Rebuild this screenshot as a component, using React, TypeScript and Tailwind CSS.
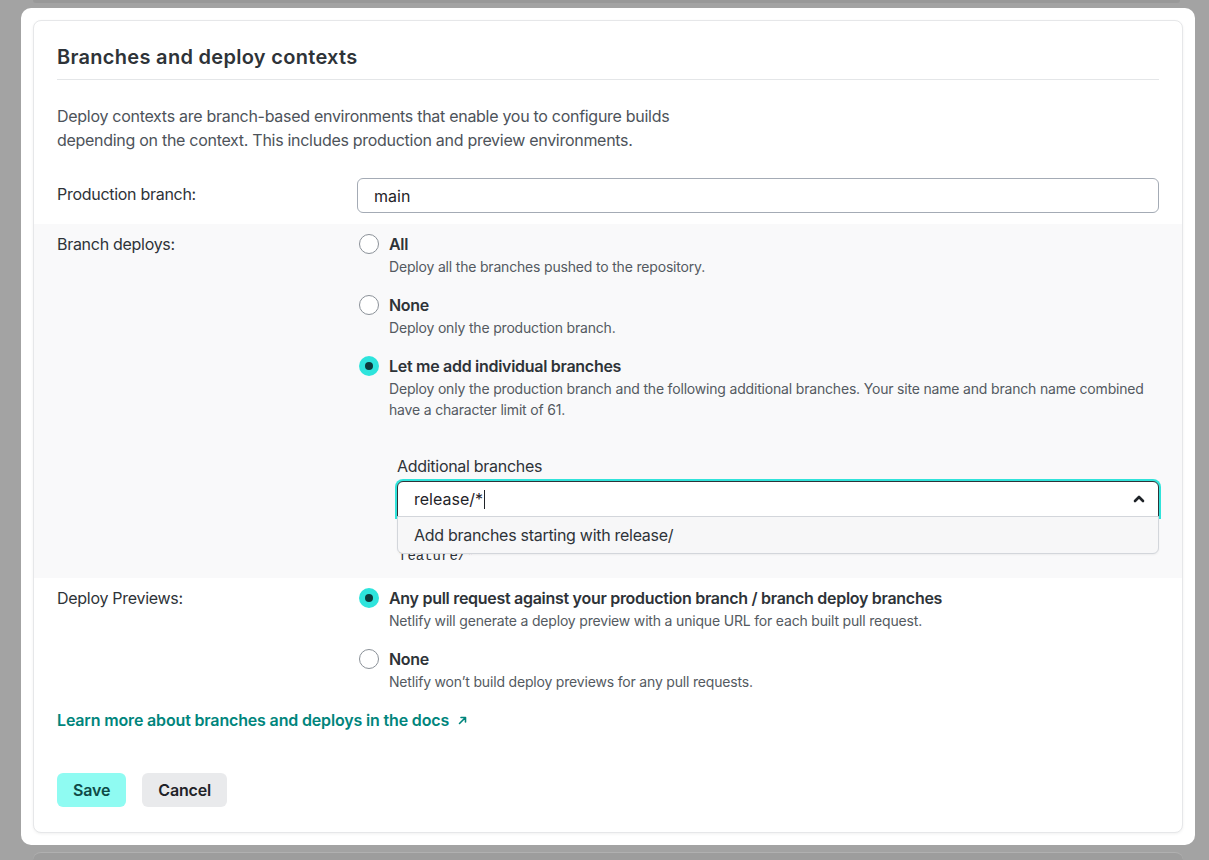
import React from "react";

type RadioProps = {
  checked?: boolean;
  title: string;
  description: string;
};

function Radio({ checked, title, description }: RadioProps) {
  return (
    <div className="flex gap-[10px]">
      <div className="pt-[2px]">
        {checked ? (
          <span className="ml-[2px] flex h-5 w-5 items-center justify-center rounded-full bg-[#2ee4dc]">
            <span className="h-[8px] w-[8px] rounded-full bg-[#0d3a3c]" />
          </span>
        ) : (
          <span className="ml-[2px] block h-5 w-5 rounded-full border border-[#8b9198] bg-white" />
        )}
      </div>
      <div>
        <div className="text-base leading-6 font-semibold tracking-[-0.018em] text-[#2e3338]">{title}</div>
        <div className="text-sm leading-[21px] tracking-[-0.013em] text-[#545a61]">{description}</div>
      </div>
    </div>
  );
}

function Row({ label, children }: { label: string; children: React.ReactNode }) {
  return (
    <div className="flex px-[23px]">
      <div className="w-[300px] shrink-0 pt-[8px] text-base leading-6 tracking-[-0.018em] text-[#2e3338]">{label}</div>
      <div className="flex-1">{children}</div>
    </div>
  );
}

export default function App() {
  return (
    <div
      className="min-h-[860px] bg-[#a3a3a3]"
      style={{ fontFamily: "Inter, 'Noto Sans', sans-serif" }}
    >
      <div className="mr-[29px] ml-[33px] h-[3px] rounded-b-lg bg-[#999999]" />
      <div className="mt-[5px] mr-[14px] ml-[21px] rounded-[10px] bg-white p-3">
        <div className="rounded-lg border border-[#e6e7e9] bg-white pt-[22px] pb-[25px] shadow-[0_1px_3px_rgba(0,0,0,0.06)]">
          <div className="mx-[23px] border-b border-[#e4e6e8] pb-[8px]">
            <h2 className="text-xl leading-7 font-semibold tracking-[0.015em] text-[#2e3338]">
              Branches and deploy contexts
            </h2>
          </div>

          <p className="mx-[23px] mt-6 max-w-[620px] text-base leading-6 tracking-[-0.018em] text-[#4d535a]">
            Deploy contexts are branch-based environments that enable you to configure builds depending on the
            context. This includes production and preview environments.
          </p>

          <div className="mt-[26px] flex px-[23px] pb-[11px]">
            <div className="w-[300px] shrink-0 pt-1 text-base leading-6 tracking-[-0.018em] text-[#2e3338]">
              Production branch:
            </div>
            <div className="flex h-[35px] flex-1 items-center rounded-md border border-[#a4abb5] px-4 text-base text-[#1f2328]">
              main
            </div>
          </div>

          <div className="bg-[#f9f9fa] pb-[12px]">
            <Row label="Branch deploys:">
              <div className="flex flex-col gap-[16px] pt-[8px]">
                <Radio title="All" description="Deploy all the branches pushed to the repository." />
                <Radio title="None" description="Deploy only the production branch." />
                <Radio
                  checked
                  title="Let me add individual branches"
                  description="Deploy only the production branch and the following additional branches. Your site name and branch name combined have a character limit of 61."
                />
              </div>
              <div className="mt-[34px] ml-10">
                <div className="text-base leading-6 tracking-[-0.018em] text-[#2e3338]">Additional branches</div>
                <div className="relative mt-[3px]">
                  <div className="flex h-9 items-center justify-between rounded-t-md border border-[#2e3338] bg-white pr-[12px] pl-4 text-base text-[#1f2328] ring-2 ring-[#30e3da]">
                    <span className="flex items-center">
                      release/*
                      <span className="ml-[1px] inline-block h-[19px] w-px bg-[#1f2328]" />
                    </span>
                    <svg width="14" height="14" viewBox="0 0 14 14" fill="none">
                      <path
                        d="M3 9 L7 5 L11 9"
                        stroke="#1f2328"
                        strokeWidth="2.6"
                        strokeLinecap="round"
                        strokeLinejoin="round"
                      />
                    </svg>
                  </div>
                  <div className="relative z-10 -mt-px">
                    <div className="absolute top-0 right-0 left-0 flex h-[38px] items-center rounded-b-md border border-[#d3d6db] bg-[#f7f7f8] px-4 text-base tracking-[-0.018em] text-[#2e3338] shadow-[0_1px_2px_rgba(0,0,0,0.05)]">
                      Add branches starting with release/
                    </div>
                  </div>
                  <div className="mt-[30px] pl-[2px] font-mono text-sm leading-5 text-[#2e3338]">feature/*</div>
                </div>
              </div>
            </Row>
          </div>

          <div>
            <Row label="Deploy Previews:">
              <div className="flex flex-col gap-[16px] pt-[8px]">
                <Radio
                  checked
                  title="Any pull request against your production branch / branch deploy branches"
                  description="Netlify will generate a deploy preview with a unique URL for each built pull request."
                />
                <Radio title="None" description="Netlify won’t build deploy previews for any pull requests." />
              </div>
            </Row>
          </div>

          <div className="mx-[23px] mt-[16px]">
            <a
              href="#"
              className="inline-flex items-center gap-[9px] text-base leading-6 font-semibold tracking-[-0.01em] text-[#00857c]"
            >
              Learn more about branches and deploys in the docs
              <svg width="9" height="9" viewBox="0 0 9 9" fill="none">
                <path
                  d="M1.5 7.5 L7.5 1.5 M3 1.5 H7.5 V6"
                  stroke="#00857c"
                  strokeWidth="1.6"
                  strokeLinecap="round"
                  strokeLinejoin="round"
                />
              </svg>
            </a>
          </div>

          <div className="mx-[23px] mt-[41px] flex gap-4">
            <button className="h-[34px] rounded-md bg-[#8ffbf2] px-4 text-base font-semibold tracking-[-0.01em] text-[#0e4a46]">
              Save
            </button>
            <button className="h-[34px] rounded-md bg-[#e9eaec] px-4 text-base font-semibold tracking-[-0.01em] text-[#1f2328]">
              Cancel
            </button>
          </div>
        </div>
      </div>
      <div className="mt-[7px] mr-[26px] ml-[33px] h-[12px] rounded-t-lg border-t border-[#b0b0b0] bg-[#9d9d9d]" />
    </div>
  );
}
